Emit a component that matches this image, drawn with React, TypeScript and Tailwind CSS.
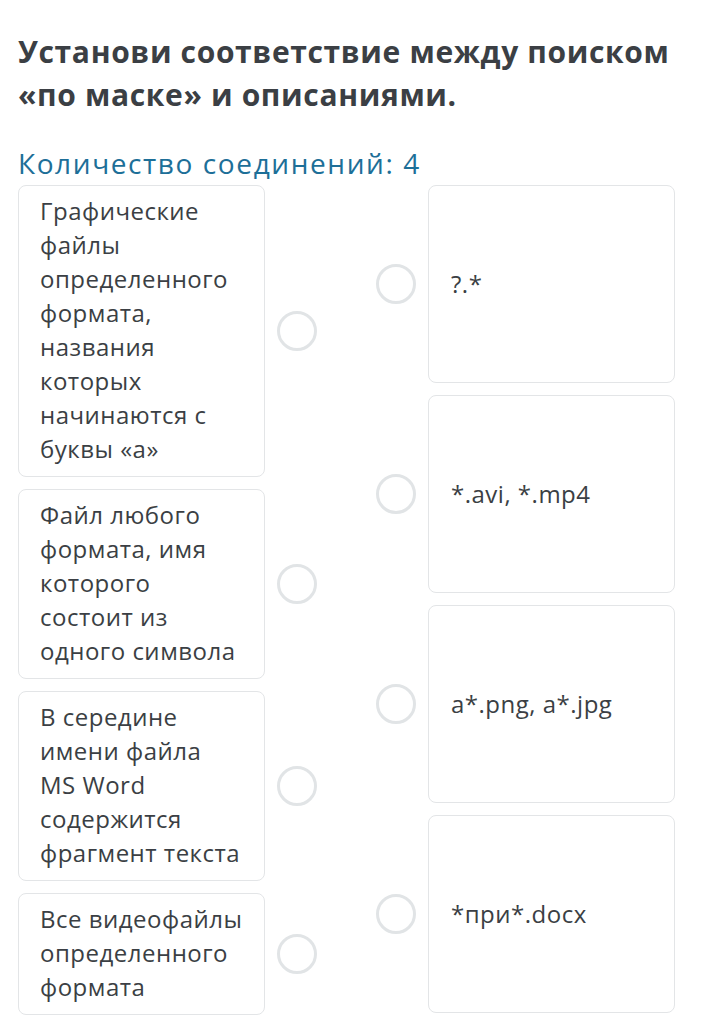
const left = [
  ['Графические', 'файлы', 'определенного', 'формата,', 'названия', 'которых', 'начинаются с', 'буквы «а»'],
  ['Файл любого', 'формата, имя', 'которого', 'состоит из', 'одного символа'],
  ['В середине', 'имени файла', 'MS Word', 'содержится', 'фрагмент текста'],
  ['Все видеофайлы', 'определенного', 'формата'],
];

const right = ['?.*', '*.avi, *.mp4', 'a*.png, a*.jpg', '*при*.docx'];

function Dot() {
  return <div className="w-10 h-10 shrink-0 rounded-full border-[3px] border-[#e1e4e6] bg-white" />;
}

export default function App() {
  return (
    <div className="min-h-screen bg-white text-[#3b3f44]" style={{ fontFamily: '"Open Sans", sans-serif' }}>
      <div className="pl-[18px] pr-[31px] pt-[30px]">
        <h1 className="text-[30px] leading-[43px] font-bold tracking-[0.65px]">
          Установи соответствие между поиском «по маске» и описаниями.
        </h1>
        <p className="mt-[29px] text-[28px] leading-[36px] tracking-[1.6px] text-[#1d6f98]">Количество соединений: 4</p>

        <div className="mt-[4px] flex justify-between">
          <div className="flex flex-col gap-3">
            {left.map((lines) => (
              <div key={lines[0]} className="flex items-center gap-3">
                <div className="w-[247px] rounded-lg border border-[#e3e5e7] pl-[21px] pr-3 pt-[8px] pb-[10px] text-[24px] leading-[34px] tracking-[0.5px] whitespace-nowrap">
                  {lines.map((l) => (
                    <div key={l}>{l}</div>
                  ))}
                </div>
                <Dot />
              </div>
            ))}
          </div>
          <div className="flex flex-col gap-3">
            {right.map((t) => (
              <div key={t} className="flex items-center gap-3">
                <Dot />
                <div className="w-[247px] h-[198px] flex items-center rounded-lg border border-[#e3e5e7] px-[22px] text-[24px] leading-[34px] tracking-[0.5px]">
                  {t}
                </div>
              </div>
            ))}
          </div>
        </div>
      </div>
    </div>
  );
}
